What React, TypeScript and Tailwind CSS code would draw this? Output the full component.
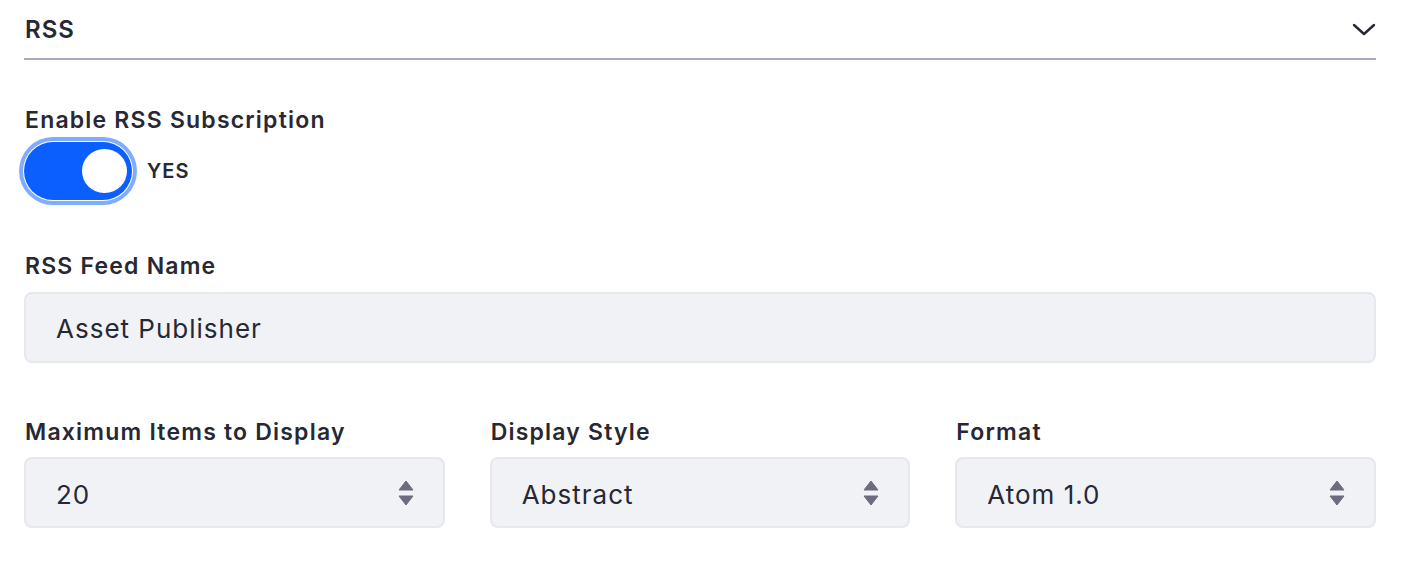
function ChevronDown() {
  return (
    <svg width="24" height="14" viewBox="0 0 24 14" className="text-[#272833]">
      <path d="M2 2 L12 11 L22 2" stroke="currentColor" strokeWidth="2.4" fill="none" strokeLinecap="round" strokeLinejoin="round" />
    </svg>
  )
}

function Carets() {
  return (
    <svg width="16" height="26" viewBox="0 0 16 26" className="text-[#6b6c7e]">
      <path d="M8 1 L15 10 L1 10 Z" fill="currentColor" strokeLinejoin="round" stroke="currentColor" strokeWidth="1" />
      <path d="M1 16 L15 16 L8 25 Z" fill="currentColor" strokeLinejoin="round" stroke="currentColor" strokeWidth="1" />
    </svg>
  )
}

function Label({ children }: { children: React.ReactNode }) {
  return <p className="text-[23px] leading-[28px] font-semibold tracking-[1.2px] pl-[1px]">{children}</p>
}

function Select({ value }: { value: string }) {
  return (
    <div className="flex items-center justify-between h-[71px] rounded-lg border-2 border-[#e7e7ed] bg-[#f1f2f5] pl-[30px] pr-[29px] text-[26px] tracking-[1px] text-[#272833]">
      <span className="pt-[3px]">{value}</span>
      <Carets />
    </div>
  )
}

export default function App() {
  return (
    <div className="w-[1414px] h-[578px] bg-white pl-[24px] pr-[38px] font-['Inter',sans-serif] text-[#272833]">
      {/* Section header */}
      <div className="flex items-center justify-between h-[60px] border-b-2 border-[#a7a9bc] pt-[2px]">
        <span className="text-[24px] font-semibold tracking-[1px] pl-[1px]">RSS</span>
        <ChevronDown />
      </div>

      {/* Toggle */}
      <div className="mt-[46px]"><Label>Enable RSS Subscription</Label></div>
      <div className="mt-[8px] flex items-center gap-[15px]">
        <div className="relative w-[108px] h-[58px] rounded-full bg-[#0b5fff] shadow-[0_0_0_1px_#ffffff,0_0_0_5px_#80acff]">
          <div className="absolute right-[5px] top-[7px] w-[45px] h-[44px] rounded-full bg-white" />
        </div>
        <span className="text-[20px] font-semibold tracking-[1px]">YES</span>
      </div>

      {/* Feed name */}
      <div className="mt-[52px]"><Label>RSS Feed Name</Label></div>
      <div className="mt-[12px] flex items-center h-[71px] rounded-lg border-2 border-[#e7e7ed] bg-[#f1f2f5] pl-[30px] pt-[2px] text-[26px] tracking-[1px]">
        Asset Publisher
      </div>

      {/* Row of selects */}
      <div className="mt-[55px] grid grid-cols-3 gap-x-[45px]">
        <div>
          <Label>Maximum Items to Display</Label>
          <div className="mt-[11px]"><Select value="20" /></div>
        </div>
        <div>
          <Label>Display Style</Label>
          <div className="mt-[11px]"><Select value="Abstract" /></div>
        </div>
        <div>
          <Label>Format</Label>
          <div className="mt-[11px]"><Select value="Atom 1.0" /></div>
        </div>
      </div>
    </div>
  )
}
